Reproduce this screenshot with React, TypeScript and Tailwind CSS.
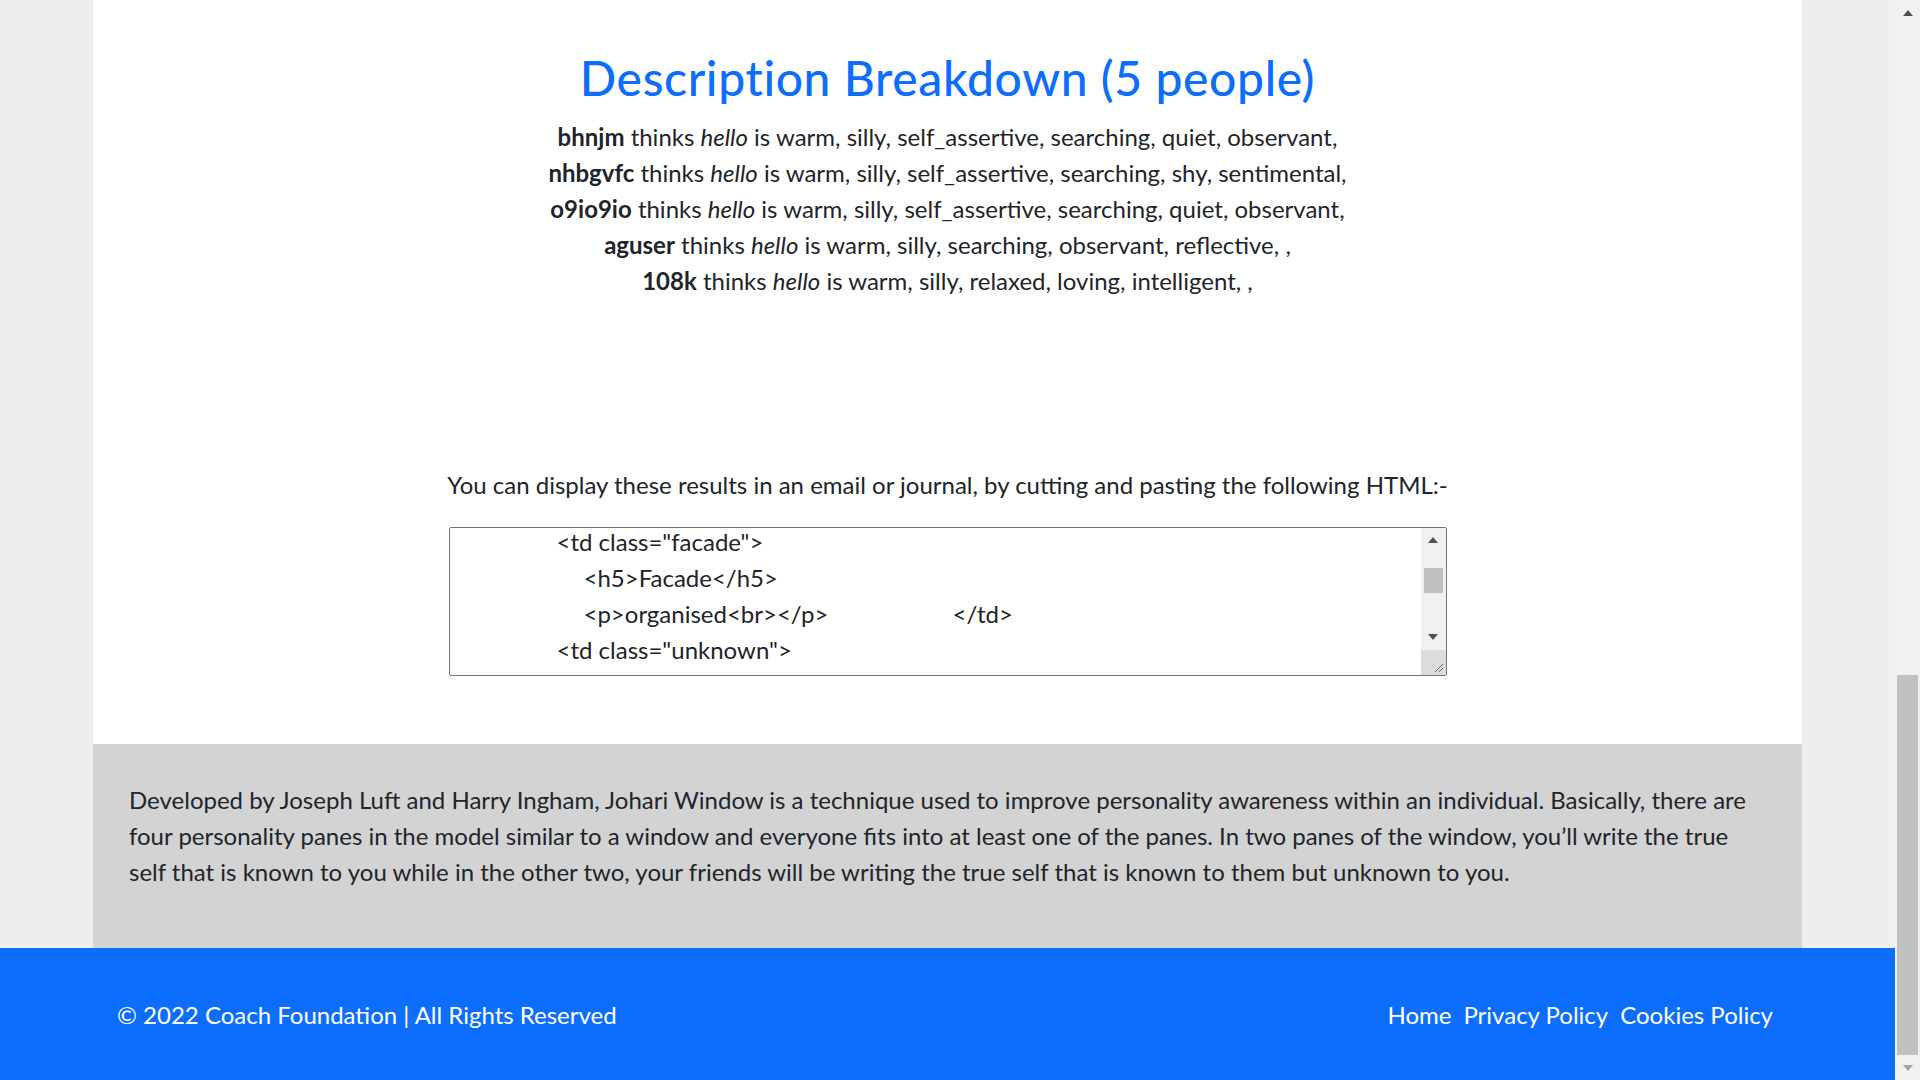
const results = [
  { name: "bhnjm", traits: "warm, silly, self_assertive, searching, quiet, observant," },
  { name: "nhbgvfc", traits: "warm, silly, self_assertive, searching, shy, sentimental," },
  { name: "o9io9io", traits: "warm, silly, self_assertive, searching, quiet, observant," },
  { name: "aguser", traits: "warm, silly, searching, observant, reflective, ," },
  { name: "108k", traits: "warm, silly, relaxed, loving, intelligent, ," },
];

function Triangle({ up, className }: { up?: boolean; className?: string }) {
  return (
    <svg width="10" height="6" viewBox="0 0 10 6" className={className}>
      <path d={up ? "M0 6 L5 0 L10 6 Z" : "M0 0 L5 6 L10 0 Z"} fill="currentColor" />
    </svg>
  );
}

function CodeBox() {
  return (
    <div className="relative mx-auto h-[149px] w-[998px] overflow-hidden rounded-[2px] border border-[#767676] bg-white text-left text-[24px] leading-[36px] text-[#212529]">
      <div className="-mt-[4px] whitespace-pre pr-[30px]">
        <div className="pl-[107px]">{'<td class="facade">'}</div>
        <div className="pl-[134px]">{"<h5>Facade</h5>"}</div>
        <div className="pl-[134px]">
          <span className="inline-block w-[369px]">{"<p>organised<br></p>"}</span>
          {"</td>"}
        </div>
        <div className="pl-[107px]">{'<td class="unknown">'}</div>
      </div>
      {/* textarea scrollbar */}
      <div className="absolute right-0 top-0 flex h-full w-[25px] flex-col bg-[#f1f1f1]">
        <div className="flex h-[25px] items-center justify-center text-[#505050]">
          <Triangle up />
        </div>
        <div className="mx-[3px] mt-[15px] h-[25px] bg-[#c1c1c1]" />
        <div className="flex-1" />
        <div className="flex h-[25px] items-center justify-center text-[#505050]">
          <Triangle />
        </div>
        <div className="relative h-[25px] bg-[#dcdcdc]">
          <svg width="12" height="12" viewBox="0 0 12 12" className="absolute bottom-[2px] right-[2px] text-[#666]">
            <path d="M11 3 L3 11 M11 7 L7 11" stroke="currentColor" strokeWidth="1" />
          </svg>
        </div>
      </div>
    </div>
  );
}

export default function App() {
  return (
    <div
      className="flex h-screen w-full overflow-hidden bg-[#eeeeee] text-[#212529]"
      style={{ fontFamily: '"Segoe UI", Lato, "Liberation Sans", sans-serif' }}
    >
      <div className="flex min-w-0 flex-1 flex-col">
        <main className="mx-[93px] flex flex-col bg-white">
          <section className="pt-[49px] text-center">
            <h2 className="mb-[12px] text-[48px] font-medium leading-[1.2] tracking-[0.6px] text-[#0d6efd]">
              Description Breakdown (5 people)
            </h2>
            <div className="text-[24px] leading-[36px]">
              {results.map((r) => (
                <div key={r.name}>
                  <b className="font-bold">{r.name}</b> thinks <i>hello</i> is {r.traits}
                </div>
              ))}
            </div>
            <p className="mb-[24px] mt-[168px] text-[24px] leading-[36px]">
              You can display these results in an email or journal, by cutting and pasting the following HTML:-
            </p>
            <CodeBox />
            <div className="h-[68px]" />
          </section>
          <section className="bg-[#d3d3d3] px-[36px] pb-[36px] pt-[38px]">
            <p className="mb-[22px] text-[24px] leading-[36px]">
              Developed by Joseph Luft and Harry Ingham, Johari Window is a technique used to improve personality
              awareness within an individual. Basically, there are four personality panes in the model similar to a
              window and everyone fits into at least one of the panes. In two panes of the window, you’ll write the
              true self that is known to you while in the other two, your friends will be writing the true self that
              is known to them but unknown to you.
            </p>
          </section>
        </main>
        <footer className="flex h-[134px] shrink-0 items-center justify-between bg-[#0d6efd] pl-[117px] pr-[122px] text-[24px] text-white">
          <span>© 2022 Coach Foundation | All Rights Reserved</span>
          <nav className="flex gap-[12px]">
            <a href="#">Home</a>
            <a href="#">Privacy Policy</a>
            <a href="#">Cookies Policy</a>
          </nav>
        </footer>
      </div>
      {/* page scrollbar */}
      <div className="flex h-full w-[25px] shrink-0 flex-col bg-[#f1f1f1]">
        <div className="flex h-[25px] items-center justify-center text-[#505050]">
          <Triangle up />
        </div>
        <div className="flex-1" />
        <div className="mx-[2px] h-[380px] bg-[#c1c1c1]" />
        <div className="flex h-[25px] items-center justify-center text-[#a3a3a3]">
          <Triangle />
        </div>
      </div>
    </div>
  );
}
